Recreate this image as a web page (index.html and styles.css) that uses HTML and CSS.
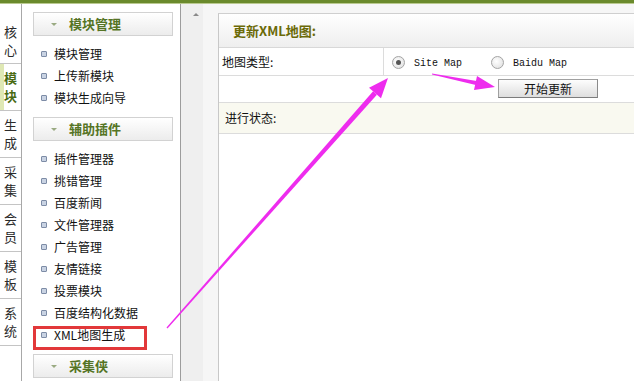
FILE: index.html
```html
<html>
    <head>
        <meta charset="utf-8">
        <link rel="stylesheet" href="styles.css">
    </head>
    <body>
        <div class="topbar"></div>
        <div class="frame">
            <ul class="tabs">
                <li>核<br>心</li>
                <li class="active">模<br>块</li>
                <li>生<br>成</li>
                <li>采<br>集</li>
                <li>会<br>员</li>
                <li>模<br>板</li>
                <li>系<br>统</li>
            </ul>
            <div class="sidebar">
                <div class="menu-head"><span class="caret"></span>模块管理</div>
                <ul class="menu">
                    <li>模块管理</li>
                    <li>上传新模块</li>
                    <li>模块生成向导</li>
                </ul>
                <div class="menu-head"><span class="caret"></span>辅助插件</div>
                <ul class="menu">
                    <li>插件管理器</li>
                    <li>挑错管理</li>
                    <li>百度新闻</li>
                    <li>文件管理器</li>
                    <li>广告管理</li>
                    <li>友情链接</li>
                    <li>投票模块</li>
                    <li>百度结构化数据</li>
                    <li class="marked">XML地图生成</li>
                </ul>
                <div class="menu-head"><span class="caret"></span>采集侠</div>
            </div>
            <div class="gutter"><span class="scroll-up"></span></div>
            <div class="work">
                <div class="panel">
                    <div class="panel-title">更新XML地图:</div>
                    <div class="row">
                        <div class="label">地图类型:</div>
                        <div class="options">
                            <span class="radio checked"></span><span class="opt">Site Map</span>
                            <span class="radio"></span><span class="opt">Baidu Map</span>
                        </div>
                    </div>
                    <div class="row row-btn">
                        <button class="btn">开始更新</button>
                    </div>
                    <div class="row row-status">进行状态:</div>
                </div>
            </div>
        </div>
        <svg class="arrows" width="634" height="381" viewBox="0 0 634 381">
            <!-- long arrow from the menu item to the map type -->
            <polygon fill="#ee2cee" points="167.5,328.5 166.5,327.5 373.1,91.3 376.9,94.7"/>
            <polygon fill="#ee2cee" points="388,78 381,98.3 369,87.7"/>
            <!-- short arrow to the button -->
            <polygon fill="#ee2cee" points="432,73.5 432,74.5 475.8,85 476.6,81"/>
            <polygon fill="#ee2cee" points="495,87 474,89.9 477,76.1"/>
        </svg>
    </body>
</html>
```

FILE: styles.css
```css
body {
    margin: 0;
    width: 634px;
    height: 381px;
    overflow: hidden;
    position: relative;
    font-family: "Noto Sans CJK SC", "Liberation Sans", sans-serif;
    font-size: 12px;
    color: #111;
    background: #fff;
}

.topbar {
    height: 3px;
    background: #6a8a2c;
    border-bottom: 1px solid #b9c98f;
}

.frame {
    display: flex;
    height: 377px;
}

/* vertical tabs */
.tabs {
    list-style: none;
    margin: 0;
    padding: 14px 0 0 0;
    width: 21px;
    border-right: 1px solid #a8a8a8;
    background: #fff;
}

.tabs li {
    height: 46px;
    border-bottom: 1px solid #c4c4c4;
    box-sizing: border-box;
    display: flex;
    align-items: center;
    justify-content: center;
    text-align: center;
    font-size: 13px;
    line-height: 18px;
    color: #2a2a2a;
}

.tabs li + li {
    height: 47px;
}

.tabs li.active {
    color: #4a6a12;
    font-weight: bold;
    background: linear-gradient(to right, #dfe8b4 4px, #fff 4px);
}

/* left menu */
.sidebar {
    width: 147px;
    padding: 8px 0 0 11px;
    border-right: 1px solid #9c9c9c;
    background: #fff;
}

.menu-head {
    height: 22px;
    width: 138px;
    border: 1px solid #d2d2d2;
    background: linear-gradient(#ffffff, #ececec);
    color: #557424;
    font-weight: bold;
    font-size: 13px;
    line-height: 22px;
    display: flex;
    align-items: center;
}

.caret {
    width: 0;
    height: 0;
    border-left: 3px solid transparent;
    border-right: 3px solid transparent;
    border-top: 3px solid #9aaa82;
    margin: 1px 12px 0 17px;
}

.menu {
    list-style: none;
    margin: 7px 0 8px 0;
    padding: 0;
}

.menu li {
    position: relative;
    height: 22px;
    line-height: 22px;
    padding-left: 21px;
}

.menu li::before {
    content: "";
    position: absolute;
    left: 8px;
    top: 8px;
    width: 4px;
    height: 4px;
    border: 1px solid #7d8ca6;
    border-radius: 1px;
    background: #c9d3e3;
}

.menu li.marked::after {
    content: "";
    position: absolute;
    left: 0;
    top: 2px;
    width: 114px;
    height: 24px;
    box-sizing: border-box;
    border: 3px solid #e2383a;
}

/* scroll gutter */
.gutter {
    width: 22px;
    background: #efefef;
    position: relative;
}

.scroll-up {
    position: absolute;
    left: 12px;
    top: 9px;
    width: 0;
    height: 0;
    border-left: 3px solid transparent;
    border-right: 3px solid transparent;
    border-bottom: 3px solid #8a8a8a;
}

.work {
    flex: 1;
    background: #f6f6f6;
    padding: 9px 0 0 15px;
}

.panel {
    height: 100%;
    background: #fff;
    border-top: 1px solid #cfcfcf;
    border-left: 1px solid #c8c8c8;
}

.panel-title {
    height: 33px;
    line-height: 33px;
    padding-left: 14px;
    background: linear-gradient(#ffffff, #eeeeee);
    border-bottom: 1px solid #d8d8d8;
    color: #6b6a08;
    font-weight: bold;
    font-size: 13px;
}

.row {
    display: flex;
    border-bottom: 1px solid #dcdcdc;
}

.row .label {
    width: 161px;
    height: 27px;
    line-height: 27px;
    padding-left: 3px;
    border-right: 1px solid #dcdcdc;
}

.options {
    display: flex;
    align-items: center;
    padding-left: 8px;
    padding-top: 1px;
}

.radio {
    width: 11px;
    height: 11px;
    border-radius: 50%;
    border: 1px solid #a4a4a4;
    background: radial-gradient(circle at 40% 40%, #ffffff, #dcdcdc);
    display: flex;
    align-items: center;
    justify-content: center;
}

.radio.checked::after {
    content: "";
    width: 5px;
    height: 5px;
    border-radius: 50%;
    background: #555;
}

.opt {
    font-family: "Liberation Mono", monospace;
    font-size: 10px;
    margin: 2px 29px 0 9px;
}

.row-btn {
    height: 26px;
    padding-left: 279px;
    align-items: flex-start;
}

.btn {
    margin-top: 3px;
    width: 100px;
    height: 19px;
    padding: 0;
    font-family: "Noto Sans CJK SC", sans-serif;
    font-size: 12px;
    line-height: 16px;
    color: #111;
    background: linear-gradient(#fdfdfd, #dedede);
    border: 1px solid #a0a0a0;
    border-right-color: #8a8a8a;
    border-bottom-color: #7c7c7c;
}

.row-status {
    height: 30px;
    line-height: 30px;
    padding-left: 6px;
    background: #f9f9f0;
}

.arrows {
    position: absolute;
    left: 0;
    top: 0;
    pointer-events: none;
}
```
